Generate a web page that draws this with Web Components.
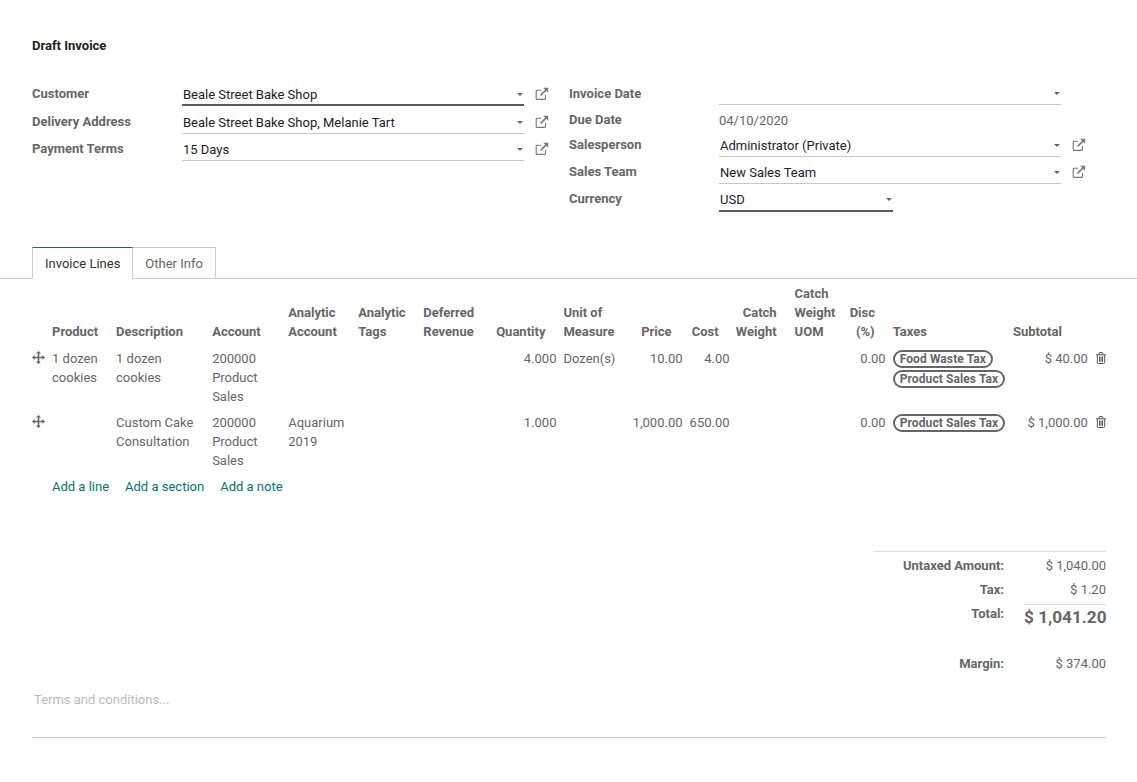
<!DOCTYPE html>
<html lang="en"><head><meta charset="utf-8"><title>Draft Invoice</title>
<style>
html,body{margin:0;padding:0;background:#fff}
body{font:13px/19px Roboto,"Liberation Sans",sans-serif;color:#666}
</style></head><body>
<invoice-app></invoice-app>
<script>
const ICON={
ext:`<svg width="14" height="14" viewBox="0 0 14 14" fill="none" stroke="#777" stroke-width="1.1"><path d="M10.5 8v3.4a1 1 0 0 1-1 1H2.2a1 1 0 0 1-1-1V4.2a1 1 0 0 1 1-1H6"/><path d="M5.6 8.4 11.4 2.6" stroke-width="1.5"/><path d="M8.2 .8h5v5z" fill="#777" stroke="none"/></svg>`,
caret:`<svg width="6" height="3" viewBox="0 0 6 3"><path d="M0 0h6L3 3z" fill="#666"/></svg>`,
move:`<svg width="13" height="13" viewBox="0 0 13 13" fill="#666"><path d="M6.5 0 9 2.6H7.3v3.1h3.1V4L13 6.5 10.4 9V7.3H7.3v3.1H9L6.5 13 4 10.4h1.7V7.3H2.6V9L0 6.5 2.6 4v1.7h3.1V2.6H4z"/></svg>`,
trash:`<svg width="10" height="12" viewBox="0 0 10 12" fill="none" stroke="#555" stroke-width="1"><path d="M.2 2.8h9.6"/><path d="M3.2 2.6V1.3q0-.8.8-.8h2q.8 0 .8.8v1.3"/><path d="M1.3 2.8v7.7q0 1 1 1h5.4q1 0 1-1V2.8"/><path d="M3.5 4.5v5.3M5 4.5v5.3M6.5 4.5v5.3"/></svg>`};

class FormRow extends HTMLElement{
 constructor(){super();const s=this.attachShadow({mode:'open'});
  const a=n=>this.getAttribute(n);
  s.innerHTML=`<style>
  :host{display:grid;grid-template-columns:150px var(--w,342px) auto;height:var(--h,27px);align-items:end}
  .l{font-weight:700;color:#666;align-self:start;padding-top:var(--lt,0);line-height:19px}
  .f{box-sizing:border-box;height:var(--fh,22px);margin-bottom:var(--mb,0);padding:0 0 var(--pb,0) 1px;display:flex;align-items:center;justify-content:space-between;border-bottom:1px solid #c8c8c8;color:#222;line-height:19px}
  :host([focus]) .f{border-bottom:2px solid #5a5a5a}
  :host([plain]) .f{border:0;color:#666;padding-left:0;height:20px}
  svg{display:block}
  .c{margin-right:1px}
  .x{margin:0 0 4px 10.5px;height:16px;display:flex;align-items:center}
  </style><div class="l">${a('label')}</div><div class="f"><span><slot></slot></span>${this.hasAttribute('plain')?'':`<span class="c">${ICON.caret}</span>`}</div>${this.hasAttribute('link')?`<div class="x">${ICON.ext}</div>`:''}`;
 }
}
customElements.define('form-row',FormRow);

class TagPill extends HTMLElement{
 constructor(){super();this.attachShadow({mode:'open'}).innerHTML=`<style>
 :host{display:block;width:max-content;box-sizing:border-box;height:18px;border:2px solid #666;border-radius:9px;padding:0 5px;font-weight:700;font-size:12px;line-height:14px;color:#666;margin-bottom:2px;letter-spacing:.1px}
 </style><slot></slot>`;}
}
customElements.define('tag-pill',TagPill);

class TabBar extends HTMLElement{
 constructor(){super();this.attachShadow({mode:'open'}).innerHTML=`<style>
 :host{display:flex;height:32px;padding-left:32px;border-bottom:1px solid #ccc;align-items:flex-start}
 div{box-sizing:border-box;height:32px;margin-top:1px;padding:6px 12px 0;border:1px solid #ccc;border-left-width:0;line-height:19px;color:#666;background:#fff}
 .a{border-left-width:1px;border-top-color:#1f5f7f;border-bottom-color:#fff;color:#333}
 </style><div class="a">Invoice Lines</div><div>Other Info</div>`;}
}
customElements.define('tab-bar',TabBar);

class InvoiceLines extends HTMLElement{
 constructor(){super();
 const W=[17,64,96,76,70,65,70,69,65,61,47,59,55,42,121,81,15];
 const H=[['',''],['Product',''],['Description',''],['Account',''],['Analytic<br>Account',''],['Analytic<br>Tags',''],['Deferred<br>Revenue',''],['Quantity','r'],['Unit of<br>Measure','u'],['Price','r'],['Cost','r'],['Catch<br>Weight','r cw'],['Catch<br>Weight<br>UOM',''],['Disc<br>(%)','r'],['Taxes','t'],['Subtotal','r s'],['','']];
 const R=[['1 dozen cookies','1 dozen cookies','200000 Product Sales','','','','4.000','Dozen(s)','10.00','4.00','','','0.00',['Food Waste Tax','Product Sales Tax'],'$ 40.00'],
 ['','Custom Cake Consultation','200000 Product Sales','Aquarium 2019','','','1.000','','1,000.00','650.00','','','0.00',['Product Sales Tax'],'$ 1,000.00']];
 const rightIdx=new Set([6,8,9,10,11,12,14]);
 const rows=R.map(r=>`<tr><td class="h">${ICON.move}</td>${r.map((c,i)=>{
   if(Array.isArray(c))return `<td class="tg">${c.map(t=>`<tag-pill>${t}</tag-pill>`).join('')}</td>`;
   return `<td class="${rightIdx.has(i)?'r':(i===7?'u':'')}">${c}</td>`}).join('')}<td class="del">${ICON.trash}</td></tr>`).join('');
 this.attachShadow({mode:'open'}).innerHTML=`<style>
 :host{display:block;padding:0 31px 0 32px}
 table{border-collapse:collapse;table-layout:fixed;width:1074px}
 th{font-weight:700;color:#666;text-align:left;vertical-align:bottom;padding:5px 3px 5px;line-height:19px}
 th.r{text-align:right;padding-right:14px}
 th.cw{padding-right:15px}
 th.t{padding-left:4px}
 th.s{padding-right:29px}
 th.u,td.u{padding-left:4px}
 td{vertical-align:top;padding:3px 3px 4px;line-height:19px;color:#666}
 td.r{text-align:right}
 td.h{padding:5px 0 0 0}
 td.h svg{display:block}
 td.tg{padding:4px 0 0 4px}
 td.del{padding:6px 0 0 5px}
 td.del svg{display:block}
 .add{display:flex;gap:16px;padding:3px 0 0 20px;color:#00796b;line-height:19px}
 </style><table><colgroup>${W.map(w=>`<col style="width:${w}px">`).join('')}</colgroup>
 <thead><tr>${H.map(h=>`<th class="${h[1]}">${h[0]}</th>`).join('')}</tr></thead><tbody>${rows}</tbody></table>
 <div class="add"><span>Add a line</span><span>Add a section</span><span>Add a note</span></div>`;
 }
}
customElements.define('invoice-lines',InvoiceLines);

class TotalsBox extends HTMLElement{
 constructor(){super();this.attachShadow({mode:'open'}).innerHTML=`<style>
 :host{display:block;width:232px;margin:0 31px 0 auto;border-top:1px solid #ddd;box-sizing:border-box}
 .g{display:grid;grid-template-columns:130px 102px;align-items:start}
 .k{font-weight:700;text-align:right;color:#666;line-height:19px}
 .v{text-align:right;line-height:19px;color:#666}
 .p{padding-top:4px;height:20px}
 .tt{margin-top:4px}
 .tot{margin-top:4px;border-top:1px solid #ddd;font-size:17.2px;font-weight:700;line-height:25px;height:31px;margin-left:20px;white-space:nowrap}
 .m{margin-top:18px}
 </style><div class="g">
 <div class="k p">Untaxed Amount:</div><div class="v p">$ 1,040.00</div>
 <div class="k p">Tax:</div><div class="v p">$ 1.20</div>
 <div class="k tt">Total:</div><div class="v tot">$ 1,041.20</div>
 <div class="k m">Margin:</div><div class="v m">$ 374.00</div>
 </div>`;}
}
customElements.define('totals-box',TotalsBox);

class InvoiceApp extends HTMLElement{
 constructor(){super();this.attachShadow({mode:'open'}).innerHTML=`<style>
 :host{display:block;height:782px;box-sizing:border-box;padding-top:36px;overflow:hidden}
 h1{margin:0 0 0 32px;font:700 13px/19px Roboto,"Liberation Sans",sans-serif;color:#222}
 .form{display:grid;grid-template-columns:537px 1fr;padding:24px 0 0 32px;height:167px;box-sizing:content-box}
 .terms{margin:15px 31px 0 32px;height:50px;box-sizing:border-box;padding:2px 2px 0;color:#bbb;border-bottom:1px solid #ccc;line-height:19px}
 </style>
 <h1>Draft Invoice</h1>
 <div class="form">
  <div>
   <form-row label="Customer" link focus style="--h:27px;--lt:5px">Beale Street Bake Shop</form-row>
   <form-row label="Delivery Address" link style="--h:28px;--lt:6px">Beale Street Bake Shop, Melanie Tart</form-row>
   <form-row label="Payment Terms" link style="--h:27px;--lt:5px">15 Days</form-row>
  </div>
  <div>
   <form-row label="Invoice Date" style="--h:26px;--lt:5px"></form-row>
   <form-row label="Due Date" plain style="--h:25px;--lt:5px">04/10/2020</form-row>
   <form-row label="Salesperson" link style="--h:27px;--lt:5px">Administrator (Private)</form-row>
   <form-row label="Sales Team" link style="--h:27px;--lt:5px">New Sales Team</form-row>
   <form-row label="Currency" focus style="--h:27px;--lt:5px;--w:174px;--fh:23px;--mb:-1px;--pb:1px">USD</form-row>
  </div>
 </div>
 <tab-bar></tab-bar>
 <invoice-lines></invoice-lines>
 <div style="height:55px"></div>
 <totals-box></totals-box>
 <div class="terms">Terms and conditions...</div>`;}
}
customElements.define('invoice-app',InvoiceApp);
</script>
</body></html>
